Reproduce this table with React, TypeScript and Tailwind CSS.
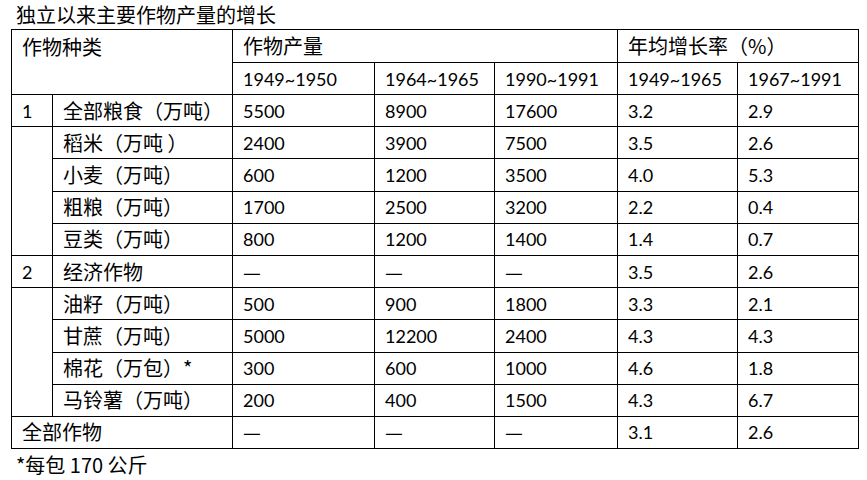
const cjk = "font-['Noto_Sans_CJK_SC',sans-serif] text-[20px]";
const num = "font-['Lato','Noto_Sans_CJK_SC',sans-serif] text-[18px]";
const cell = "border border-black px-[10px] py-0 text-left align-middle leading-none";

type Row = { no?: string; noSpan?: number; name: string; full?: boolean; vals: string[] };

const rows: Row[] = [
  { no: "1", name: "全部粮食（万吨）", vals: ["5500", "8900", "17600", "3.2", "2.9"] },
  { noSpan: 4, name: "稻米（万吨 ）", vals: ["2400", "3900", "7500", "3.5", "2.6"] },
  { name: "小麦（万吨）", vals: ["600", "1200", "3500", "4.0", "5.3"] },
  { name: "粗粮（万吨）", vals: ["1700", "2500", "3200", "2.2", "0.4"] },
  { name: "豆类（万吨）", vals: ["800", "1200", "1400", "1.4", "0.7"] },
  { no: "2", name: "经济作物", vals: ["—", "—", "—", "3.5", "2.6"] },
  { noSpan: 4, name: "油籽（万吨）", vals: ["500", "900", "1800", "3.3", "2.1"] },
  { name: "甘蔗（万吨）", vals: ["5000", "12200", "2400", "4.3", "4.3"] },
  { name: "棉花（万包）*", vals: ["300", "600", "1000", "4.6", "1.8"] },
  { name: "马铃薯（万吨）", vals: ["200", "400", "1500", "4.3", "6.7"] },
  { full: true, name: "全部作物", vals: ["—", "—", "—", "3.1", "2.6"] },
];

export default function App() {
  return (
    <div className="w-[867px] h-[480px] bg-white text-black">
      <div className={`h-[29px] pl-[16px] flex items-center ${cjk}`}>独立以来主要作物产量的增长</div>
      <table className="ml-[11px] w-[848px] table-fixed border-collapse">
        <colgroup>
          <col className="w-[41px]" />
          <col className="w-[180px]" />
          <col className="w-[142px]" />
          <col className="w-[120px]" />
          <col className="w-[123px]" />
          <col className="w-[120px]" />
          <col className="w-[121px]" />
        </colgroup>
        <tbody>
          <tr className="h-[33px]">
            <td colSpan={2} rowSpan={2} className={`${cell} ${cjk} !align-top pt-[7px]`}>作物种类</td>
            <td colSpan={3} className={`${cell} ${cjk}`}>作物产量</td>
            <td colSpan={2} className={`${cell} ${cjk}`}>年均增长率（%）</td>
          </tr>
          <tr className="h-[32px]">
            {["1949~1950", "1964~1965", "1990~1991", "1949~1965", "1967~1991"].map((t) => (
              <td key={t} className={`${cell} ${num}`}>{t}</td>
            ))}
          </tr>
          {rows.map((r, i) => (
            <tr key={i} className="h-[32.2px]">
              {r.full ? (
                <td colSpan={2} className={`${cell} ${cjk}`}>{r.name}</td>
              ) : (
                <>
                  {r.no && <td className={`${cell} ${num}`}>{r.no}</td>}
                  {r.noSpan && <td rowSpan={r.noSpan} className={cell}></td>}
                  <td className={`${cell} ${cjk}`}>{r.name}</td>
                </>
              )}
              {r.vals.map((v, j) => (
                <td key={j} className={`${cell} ${v === "—" ? cjk : num}`}>{v}</td>
              ))}
            </tr>
          ))}
        </tbody>
      </table>
      <div className={`h-[32px] pl-[16px] flex items-center ${cjk}`}>*每包 170 公斤</div>
    </div>
  );
}
